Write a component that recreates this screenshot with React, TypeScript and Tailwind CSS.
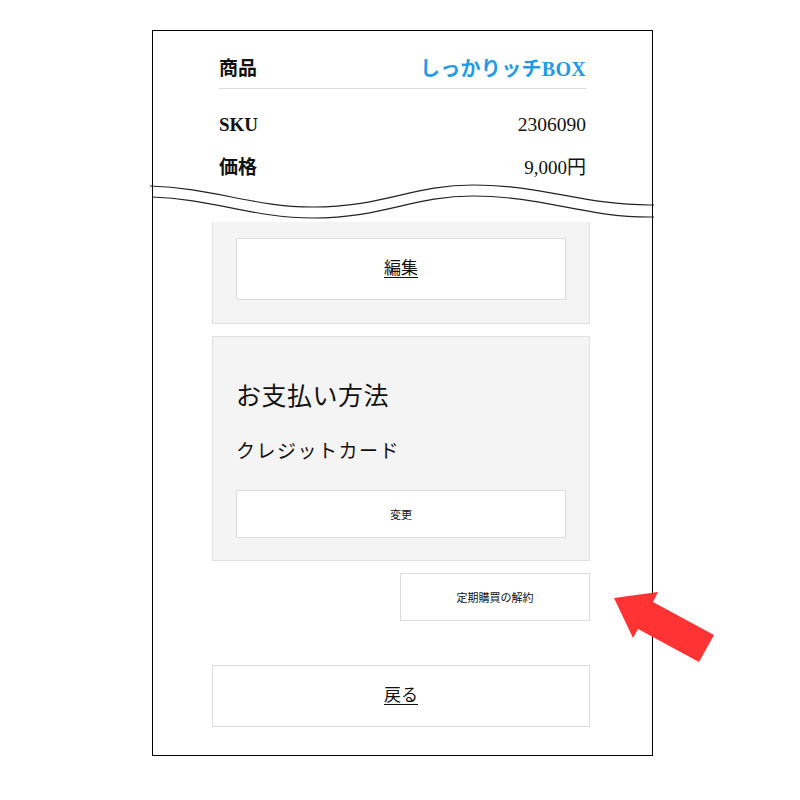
import React from "react";

const serif = { fontFamily: '"Liberation Serif", "Noto Sans CJK JP", serif' };

export default function App() {
  return (
    <div className="relative w-[800px] h-[800px] bg-white pt-[30px]" style={serif}>
      <div className="ml-[152px] w-[501px] h-[726px] border border-black flex flex-col text-[#111]">
        {/* header */}
        <div className="px-[66px] pt-[19px]">
          <div className="flex items-center justify-between h-[38px] border-b border-[#dcdcdc] box-content">
            <span className="text-[19px] font-bold">商品</span>
            <span className="text-[20px] font-bold text-[#1e9be6] tracking-[0.3px]">しっかりッチBOX</span>
          </div>
          <div className="mt-[21px] flex items-center justify-between h-[30px]">
            <span className="text-[19px] font-bold">SKU</span>
            <span className="text-[19.5px]">2306090</span>
          </div>
          <div className="mt-[13px] flex items-center justify-between h-[30px]">
            <span className="text-[19px] font-bold">価格</span>
            <span className="text-[19px]">9,000円</span>
          </div>
        </div>
        {/* wave */}
        <svg className="block overflow-visible mt-[1px]" width="499" height="38" viewBox="0 0 499 38" fill="none">
          <path d="M -3 2 C 60 4, 100 23, 160 23 C 230 23, 260 1, 320 1 C 390 1, 430 21, 497 21 L 501 21" stroke="#222" strokeWidth="1.2" />
          <path d="M -1 13 C 60 15, 100 34, 160 34 C 230 34, 260 12, 320 12 C 390 12, 430 33, 497 33 L 501 33" stroke="#222" strokeWidth="1.2" />
        </svg>
        {/* content */}
        <div className="px-[59px]">
          <div className="w-[378px] bg-[#f4f4f4] border-x border-b border-[#e0e0e0] px-[23px] pt-[16px] pb-[23px]">
            <div className="h-[62px] bg-white border border-[#dcdcdc] flex items-center justify-center">
              <span className="text-[17px] underline underline-offset-[3px]">編集</span>
            </div>
          </div>
          <div className="mt-[12px] w-[378px] bg-[#f4f4f4] border border-[#e0e0e0] px-[23px] pt-[42px] pb-[22px]">
            <div className="h-[36px] flex items-center text-[25px] tracking-[0.5px]">お支払い方法</div>
            <div className="mt-[22px] h-[30px] flex items-center text-[19px] tracking-[1.5px]">クレジットカード</div>
            <div className="mt-[23px] h-[48px] bg-white border border-[#dcdcdc] flex items-center justify-center">
              <span className="text-[11px]" style={{ fontFamily: '"Noto Sans CJK JP", sans-serif' }}>変更</span>
            </div>
          </div>
          <div className="mt-[12px] flex justify-end w-[378px]">
            <div className="w-[190px] h-[48px] bg-white border border-[#dcdcdc] flex items-center justify-center">
              <span className="text-[11px]" style={{ fontFamily: '"Noto Sans CJK JP", sans-serif' }}>定期購買の解約</span>
            </div>
          </div>
          <div className="mt-[44px] w-[378px] h-[62px] bg-white border border-[#dcdcdc] flex items-center justify-center">
            <span className="text-[17px] underline underline-offset-[3px]">戻る</span>
          </div>
        </div>
      </div>
      {/* red arrow */}
      <svg className="absolute left-0 top-0 pointer-events-none" width="800" height="800" viewBox="0 0 800 800">
        <polygon points="614,598 658,592 653,602 714,635 699,662 638,629 633,638" fill="#ff3333" />
      </svg>
    </div>
  );
}
